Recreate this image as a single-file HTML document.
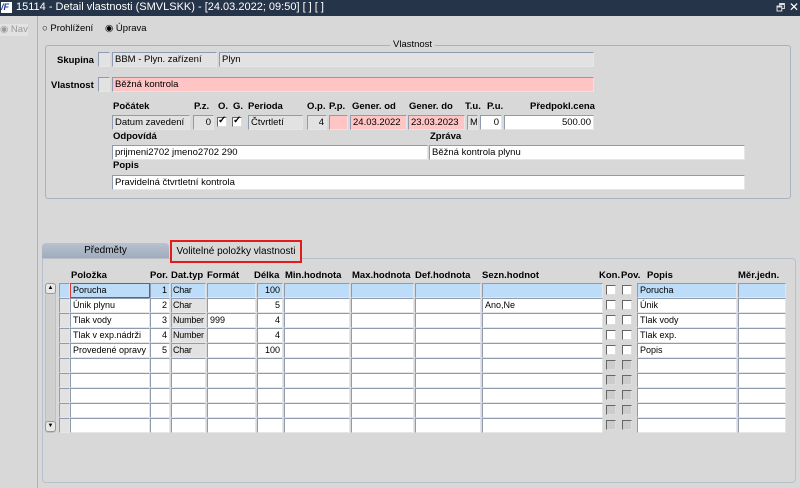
<!DOCTYPE html>
<html><head><meta charset="utf-8"><style>
*{box-sizing:border-box;margin:0;padding:0}
body{width:800px;height:488px;background:#d8d8d8;font-family:"Liberation Sans",sans-serif;font-size:9.5px;color:#000;position:relative;overflow:hidden}
.a{position:absolute;white-space:nowrap}
.f{position:absolute;height:15px;background:#fff;border:1px solid #8e9bb0;border-right-color:#e6e6e6;border-bottom-color:#e6e6e6;padding:1px 2px;line-height:11px;overflow:hidden;white-space:nowrap}
.g{background:#e2e2e2}
.p{background:#ffc4c4}
.s{background:#bcdcf8}
.r{text-align:right}
.b{font-weight:bold}
.cb{position:absolute;width:10px;height:10px;background:#fff;border:1px solid #666;border-right-color:#ddd;border-bottom-color:#ddd}
#t .f{font-size:9px}
</style></head><body>
<div class="a" style="left:0;top:0;width:800px;height:16px;background:#263449"></div>
<div class="a" style="left:1px;top:2px;width:11px;height:11px;background:#fff;color:#1a3fa0;font-size:9px;font-weight:bold;font-style:italic;line-height:11px">/F</div>
<div class="a" style="left:16px;top:1px;color:#fff;font-size:11px">15114 - Detail vlastnosti (SMVLSKK) - [24.03.2022; 09:50]  [ ]  [ ]</div>
<div class="a" style="left:776px;top:1px;color:#ddd;font-size:10px">🗗</div>
<div class="a" style="left:789px;top:0;color:#fff;font-size:12px">✕</div>
<div class="a" style="left:37px;top:16px;width:1px;height:472px;background:#b0b0b0"></div>
<div class="a" style="left:0;top:24px;width:28px;height:12px;background:#e2e2e2;color:#999">◉ Nav</div>
<div class="a" style="left:42px;top:23px">○ Prohlížení</div>
<div class="a" style="left:105px;top:23px">◉ Úprava</div>
<div class="a" style="left:45px;top:45px;width:746px;height:154px;border:1px solid #a8b2c2;border-radius:3px"></div>
<div class="a" style="left:390px;top:39px;background:#d8d8d8;padding:0 3px">Vlastnost</div>
<div class="a b" style="left:57px;top:55px">Skupina</div>
<div class="f g" style="left:98px;top:52px;width:12px"></div>
<div class="f g" style="left:112px;top:52px;width:105px">BBM - Plyn. zařízení</div>
<div class="f g" style="left:219px;top:52px;width:375px">Plyn</div>
<div class="a b" style="left:51px;top:80px">Vlastnost</div>
<div class="f g" style="left:98px;top:77px;width:12px"></div>
<div class="f p" style="left:112px;top:77px;width:482px">Běžná kontrola</div>
<div class="a b" style="left:113px;top:101px">Počátek</div>
<div class="a b" style="left:194px;top:101px">P.z.</div>
<div class="a b" style="left:218px;top:101px">O.</div>
<div class="a b" style="left:233px;top:101px">G.</div>
<div class="a b" style="left:248px;top:101px">Perioda</div>
<div class="a b" style="left:307px;top:101px">O.p.</div>
<div class="a b" style="left:329px;top:101px">P.p.</div>
<div class="a b" style="left:352px;top:101px">Gener. od</div>
<div class="a b" style="left:409px;top:101px">Gener. do</div>
<div class="a b" style="left:465px;top:101px">T.u.</div>
<div class="a b" style="left:487px;top:101px">P.u.</div>
<div class="a b" style="left:530px;top:101px">Předpokl.cena</div>
<div class="f g" style="left:112px;top:115px;width:78px">Datum zavedení</div>
<div class="f g r" style="left:193px;top:115px;width:21px">0</div>
<div class="cb" style="left:217px;top:117px"></div><div class="a" style="left:218px;top:115px;font-size:10px;font-weight:bold">✓</div>
<div class="cb" style="left:232px;top:117px"></div><div class="a" style="left:233px;top:115px;font-size:10px;font-weight:bold">✓</div>
<div class="f g" style="left:248px;top:115px;width:55px">Čtvrtletí</div>
<div class="f g r" style="left:307px;top:115px;width:20px">4</div>
<div class="f p" style="left:329px;top:115px;width:19px"></div>
<div class="f p" style="left:350px;top:115px;width:57px">24.03.2022</div>
<div class="f p" style="left:408px;top:115px;width:57px">23.03.2023</div>
<div class="f g" style="left:467px;top:115px;width:11px">M</div>
<div class="f r" style="left:480px;top:115px;width:22px">0</div>
<div class="f r" style="left:504px;top:115px;width:90px">500.00</div>
<div class="a b" style="left:113px;top:131px">Odpovídá</div>
<div class="a b" style="left:430px;top:131px">Zpráva</div>
<div class="f" style="left:112px;top:145px;width:316px">prijmeni2702 jmeno2702 290</div>
<div class="f" style="left:429px;top:145px;width:316px">Běžná kontrola plynu</div>
<div class="a b" style="left:113px;top:160px">Popis</div>
<div class="f" style="left:112px;top:175px;width:633px">Pravidelná čtvrtletní kontrola</div>

<div class="a" style="left:42px;top:243px;width:127px;height:16px;background:linear-gradient(#b8c2d0,#9eaabb);border-radius:4px 4px 0 0;text-align:center;line-height:16px;font-size:10px">Předměty</div>
<div class="a" style="left:42px;top:258px;width:754px;height:225px;border:1px solid #b8c0cc;border-radius:0 4px 4px 4px"></div>
<div class="a" style="left:170px;top:240px;width:132px;height:23px;border:2px solid #e51a1a;background:#d8d8d8;text-align:center;line-height:19px;font-size:10px">Volitelné položky vlastnosti</div>

<div class="a b" style="left:71px;top:270px">Položka</div>
<div class="a b" style="left:150px;top:270px">Por.</div>
<div class="a b" style="left:171px;top:270px">Dat.typ</div>
<div class="a b" style="left:207px;top:270px">Formát</div>
<div class="a b" style="left:254px;top:270px">Délka</div>
<div class="a b" style="left:285px;top:270px">Min.hodnota</div>
<div class="a b" style="left:352px;top:270px">Max.hodnota</div>
<div class="a b" style="left:415px;top:270px">Def.hodnota</div>
<div class="a b" style="left:482px;top:270px">Sezn.hodnot</div>
<div class="a b" style="left:599px;top:270px">Kon.</div>
<div class="a b" style="left:621px;top:270px">Pov.</div>
<div class="a b" style="left:647px;top:270px">Popis</div>
<div class="a b" style="left:738px;top:270px">Měr.jedn.</div>
<div class="a" style="left:45px;top:283px;width:11px;height:150px;background:#cfcfcf;border:1px solid #c0c0c0;border-radius:3px"></div>
<div class="a" style="left:45px;top:283px;width:11px;height:11px;background:#e8e8e8;border:1px solid #999;border-radius:3px;font-size:6px;text-align:center;line-height:9px">▲</div>
<div class="a" style="left:45px;top:421px;width:11px;height:11px;background:#e8e8e8;border:1px solid #999;border-radius:3px;font-size:6px;text-align:center;line-height:9px">▼</div>
<div id="t"></div>
<script>
var D=[["Poruch"+"a","1","Char","","100","","Poruch"+"a"],["Únik plynu","2","Char","","5","Ano,Ne","Únik"],["Tlak vody","3","Number","999","4","","Tlak vody"],["Tlak v exp.nádrži","4","Number","","4","","Tlak exp."],["Provedené opravy","5","Char","","100","","Popis"]];
var C=[[59,11],[70,80],[150,20],[171,35],[207,49],[257,26],[284,66],[351,63],[415,66],[482,121],[637,100],[738,48]];
var h="";
for(var i=0;i<10;i++){var y=283+i*15,d=D[i],s=i==0?" s":"";
for(var j=0;j<C.length;j++){var c=C[j],t="",cl="f"+s;
if(j==0)cl="f g"+(i==0?" s":"");
if(d){if(j==1)t=d[0];if(j==2){t=d[1];cl+=" r"}if(j==3){t=d[2];if(i)cl+=" g"}if(j==4)t=d[3];if(j==5){t=d[4];cl+=" r"}if(j==9)t=d[5];if(j==10)t=d[6];}
var st="left:"+c[0]+"px;top:"+y+"px;width:"+c[1]+"px";if(i==0&&j==1)st+=";border:1px solid #e03030;background:#bcdcf8";
if(j==3)st+=";padding:1px 1px;letter-spacing:-0.2px";
h+='<div class="'+cl+'" style="'+st+'">'+t+'</div>';}
h+='<div class="cb" style="left:606px;top:'+(y+2)+'px;'+(d?'':'background:#ccc')+'"></div><div class="cb" style="left:622px;top:'+(y+2)+'px;'+(d?'':'background:#ccc')+'"></div>';}
document.getElementById("t").innerHTML=h;
</script>
</body></html>
